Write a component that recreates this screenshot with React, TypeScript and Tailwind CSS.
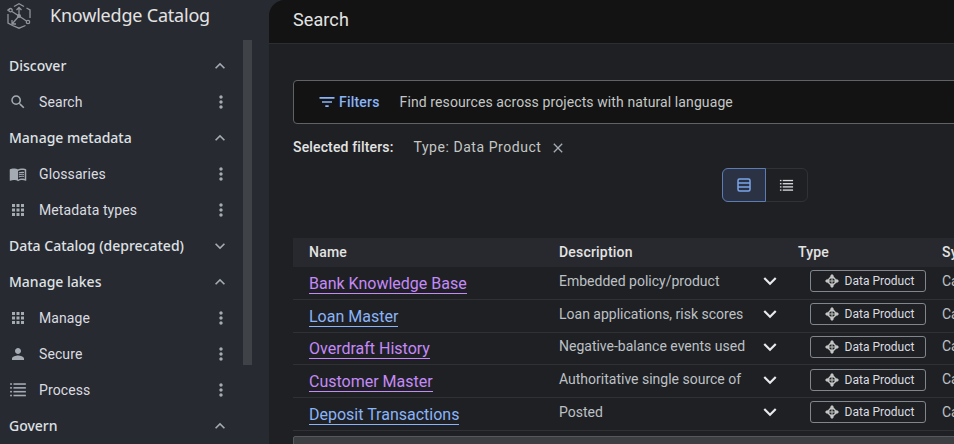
import React from 'react';
import { MdSearch, MdMenuBook, MdApps, MdPerson, MdMoreVert, MdExpandLess, MdExpandMore, MdFilterList, MdClose } from 'react-icons/md';

const navItems = [
  { type: 'head', label: 'Discover', open: true },
  { type: 'item', label: 'Search', icon: 'search' },
  { type: 'head', label: 'Manage metadata', open: true },
  { type: 'item', label: 'Glossaries', icon: 'book' },
  { type: 'item', label: 'Metadata types', icon: 'apps' },
  { type: 'head', label: 'Data Catalog (deprecated)', open: false },
  { type: 'head', label: 'Manage lakes', open: true },
  { type: 'item', label: 'Manage', icon: 'apps' },
  { type: 'item', label: 'Secure', icon: 'person' },
  { type: 'item', label: 'Process', icon: 'list' },
  { type: 'head', label: 'Govern', open: true },
];

const rows = [
  { name: 'Bank Knowledge Base', desc: 'Embedded policy/product', visited: true },
  { name: 'Loan Master', desc: 'Loan applications, risk scores', visited: false },
  { name: 'Overdraft History', desc: 'Negative-balance events used', visited: true },
  { name: 'Customer Master', desc: 'Authoritative single source of', visited: true },
  { name: 'Deposit Transactions', desc: 'Posted', visited: false },
];

function ListIcon({ className }: { className?: string }) {
  return (
    <svg viewBox="0 0 16 16" className={className} fill="currentColor">
      <rect x="1" y="2" width="1.6" height="1.4" />
      <rect x="4" y="2" width="11" height="1.4" />
      <rect x="1" y="5.4" width="1.6" height="1.4" />
      <rect x="4" y="5.4" width="11" height="1.4" />
      <rect x="1" y="8.8" width="1.6" height="1.4" />
      <rect x="4" y="8.8" width="11" height="1.4" />
      <rect x="1" y="12.2" width="1.6" height="1.4" />
      <rect x="4" y="12.2" width="11" height="1.4" />
    </svg>
  );
}

function Logo() {
  return (
    <svg viewBox="0 0 24 26" className="w-[24px] h-[26px] text-[#8f949b]" fill="none" stroke="currentColor" strokeWidth="1.3">
      <path d="M7 3.500 12 .8l5 2.700M19.500 5 23 7v8M18.500 22.500 12 25.200 5.500 22.500 1 20v-9" />
      <path d="M1 8V7l2-1" />
      <circle cx="12" cy="13" r="2" fill="currentColor" stroke="none" />
      <path d="M12 13V5M9.500 7 12 4.500 14.500 7M12 13l-7 8M5 17v4h4M12 13l7.500 5M12 13 5 8.500" />
      <circle cx="3.500" cy="7.200" r="1.700" />
      <circle cx="21" cy="19" r="1.700" />
    </svg>
  );
}

function NavIcon({ name }: { name: string }) {
  const cls = 'w-[18px] h-[18px] text-[#a4abb3]';
  if (name === 'search') return <MdSearch className={cls} />;
  if (name === 'book') return <MdMenuBook className={cls} />;
  if (name === 'apps') return <MdApps className={cls} />;
  if (name === 'person') return <MdPerson className={cls} />;
  return <ListIcon className={cls} />;
}

function ProductIcon() {
  return (
    <svg viewBox="0 0 14 14" className="w-[14px] h-[14px] text-[#c4c7c5]" fill="currentColor">
      <path d="M7 0 9.200 2.300 7 3.400 4.800 2.300zM0 7l2.300-2.200L3.400 7 2.300 9.200zM14 7l-2.300-2.200L10.600 7l1.100 2.200zM7 14l2.200-2.300L7 10.600l-2.200 1.100z" />
      <circle cx="7" cy="7" r="3.600" fill="none" stroke="currentColor" strokeWidth="1.600" />
      <path d="M7 3v8M3 7h8" stroke="currentColor" strokeWidth="1" />
    </svg>
  );
}

export default function App() {
  return (
    <div className="w-[954px] h-[444px] overflow-hidden flex bg-[#282a31] font-['Roboto',sans-serif]">
      <aside className="relative w-[269px] shrink-0">
        <div className="h-[48px] flex items-start pt-[3px] pl-[7px] gap-[19px]">
          <Logo />
          <span className="-mt-px text-[18px] leading-[26px] text-[#e3e3e3] font-['Noto_Sans',sans-serif] tracking-[-0.2px]">Knowledge Catalog</span>
        </div>
        <nav className="w-[243px]">
          {navItems.map((n) =>
            n.type === 'head' ? (
              <div key={n.label} className="h-[36px] flex items-center justify-between pl-[9px] pr-[13px]">
                <span className="-mt-[2px] text-[14px] font-medium text-[#dfe1e5] font-['Noto_Sans',sans-serif]">{n.label}</span>
                {n.open ? <MdExpandLess className="w-[20px] h-[20px] text-[#a4abb3]" /> : <MdExpandMore className="w-[20px] h-[20px] text-[#a4abb3]" />}
              </div>
            ) : (
              <div key={n.label} className="h-[36px] flex items-center pl-[9px] pr-[12px]">
                <NavIcon name={n.icon as string} />
                <span className="ml-[12px] text-[14px] text-[#dadce0] flex-1 tracking-[0.1px]">{n.label}</span>
                <MdMoreVert className="w-[20px] h-[20px] text-[#a4abb3]" />
              </div>
            ),
          )}
        </nav>
        <div className="absolute left-[243px] top-[40px] w-[9px] h-[325px] bg-[#3f4247]" />
      </aside>

      <main className="flex-1 min-w-0 bg-[#1f2023] rounded-tl-[16px] overflow-hidden">
        <header className="h-[44px] bg-[#131314] border-b border-[#2d2e30] flex items-center pl-[24px] pb-[4px]">
          <h1 className="text-[18px] text-[#e3e3e3] tracking-[0.1px]">Search</h1>
        </header>
        <div className="pl-[24px] pt-[36px] w-[800px]">
          <div className="h-[44px] bg-[#131314] border border-[#5f6368] rounded-[4px] flex items-center pl-[23px]">
            <MdFilterList className="w-[20px] h-[20px] text-[#8ab4f8]" />
            <span className="ml-[2px] text-[14px] font-medium text-[#8ab4f8] tracking-[0.2px]">Filters</span>
            <span className="ml-[20px] text-[14px] text-[#c4c7c5] tracking-[0.1px]">Find resources across projects with natural language</span>
          </div>
          <div className="h-[45px] pt-[2px] flex items-center">
            <span className="text-[14px] font-medium text-[#e3e3e3] tracking-[0.15px]">Selected filters:</span>
            <span className="ml-[20px] text-[14px] text-[#c4c7c5] tracking-[0.55px]">Type: Data Product</span>
            <MdClose className="ml-[9px] w-[16px] h-[16px] text-[#a4abb3]" />
          </div>
          <div className="ml-[429px] w-[86px] h-[34px] -mt-[1px] flex border border-[#303236] rounded-[6px]">
            <div className="w-[44px] -m-px bg-[#2a3243] border border-[#5b7cb5] rounded-l-[6px] flex items-center justify-center">
              <svg viewBox="0 0 14 14" className="w-[14px] h-[14px] text-[#7aa5ea]" fill="none" stroke="currentColor" strokeWidth="1.500">
                <rect x="1" y="1" width="12" height="12" rx="1.500" />
                <path d="M1 5h12M1 9h12" />
              </svg>
            </div>
            <div className="flex-1 flex items-center justify-center">
              <ListIcon className="w-[15px] h-[15px] text-[#dadce0]" />
            </div>
          </div>
          <div className="mt-[36px] h-[29px] bg-[#28292e] grid grid-cols-[250px_239px_144px_1fr] items-center pl-[16px] text-[14px] font-medium text-[#e3e3e3] tracking-[0.2px]">
            <span>Name</span>
            <span>Description</span>
            <span>Type</span>
            <span>System</span>
          </div>
          {rows.map((r) => (
            <div key={r.name} className="h-[32.75px] border-b border-[#303134] grid grid-cols-[250px_239px_144px_1fr] items-center pl-[16px]">
              <span className="mt-[2px]">
                <a className={r.visited ? "text-[16px] leading-[20px] text-[#c58af9] border-b border-[#c58af9]" : "text-[16px] leading-[20px] text-[#8ab4f8] border-b border-[#8ab4f8]"}>{r.name}</a>
              </span>
              <div className="flex items-center justify-between pr-[15px] -mt-[3px]">
                <span className="text-[14px] text-[#bdc1c6]">{r.desc}</span>
                <MdExpandMore className="w-[26px] h-[26px] text-[#e8eaed]" />
              </div>
              <div className="ml-[12px] w-[116px] h-[22px] -mt-[3px] border border-[#80868b] rounded-[3px] flex items-center justify-center gap-[6px] pl-[3px]">
                <ProductIcon />
                <span className="text-[12px] text-[#dadce0]">Data Product</span>
              </div>
              <span className="text-[14px] text-[#bdc1c6] -mt-[3px]">Catalog</span>
            </div>
          ))}
          <div className="mt-[5px] h-[12px] bg-[#3c3e42] border border-[#55585c] rounded-t-[2px]" />
        </div>
      </main>
    </div>
  );
}
